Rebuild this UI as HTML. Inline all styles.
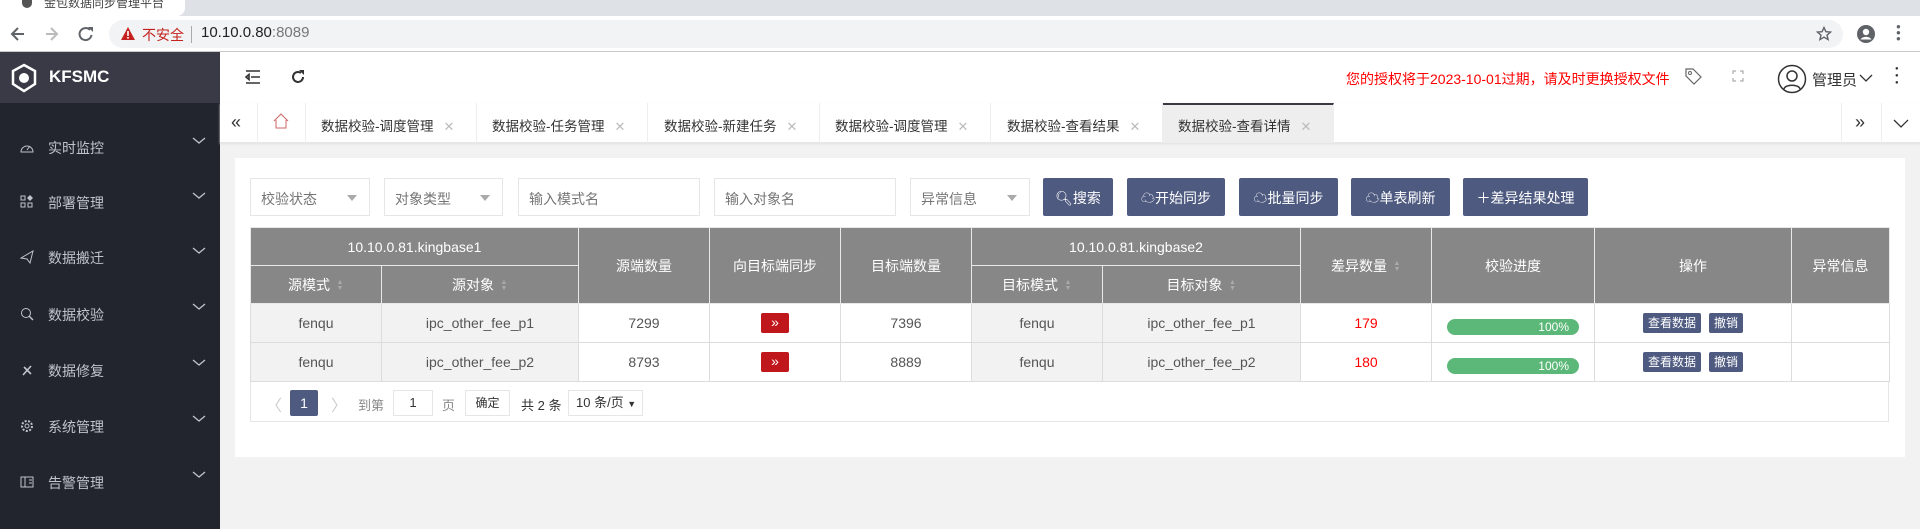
<!DOCTYPE html>
<html><head><meta charset="utf-8"><style>
*{box-sizing:border-box;margin:0;padding:0}
body{width:1920px;height:529px;overflow:hidden;font-family:"Liberation Sans","Noto Sans CJK SC",sans-serif;background:#f2f2f2;position:relative;font-size:14px;color:#333}
.abs{position:absolute}
.chrome-top{left:0;top:0;width:1920px;height:16px;background:#dee1e6}
.chrome-tab{left:0;top:0;width:185px;height:16px;background:#fff;border-radius:0 0 8px 0}
.addr{left:0;top:16px;width:1920px;height:36px;background:#fff;border-bottom:1px solid #c8c8c8}
.pill{left:109px;top:20px;width:1734px;height:28px;background:#f1f3f4;border-radius:14px}
.side{left:0;top:52px;width:220px;height:477px;background:#23252e}
.logo{left:0;top:52px;width:220px;height:51px;background:#393a46;color:#fff;font-weight:bold;font-size:17px}
.mi{left:0;width:220px;height:30px;color:#bfc3cb;font-size:14px}
.mi span{position:absolute;left:48px;top:6px}
.mi svg{position:absolute}
.hdr{left:220px;top:52px;width:1700px;height:51px;background:#fff}
.tabs{left:220px;top:103px;width:1700px;height:40px;background:#fff;border-bottom:1px solid #e6e6e6;box-shadow:0 1px 2px #e0e0e0}
.tab{position:absolute;top:0;height:40px;width:171px;border-right:1px solid #eee;font-size:13.5px;color:#333;padding:12px 0 0 15px;white-space:nowrap}
.tab i{font-style:normal;color:#bbb;margin-left:10px;font-size:13px}
.card{left:235px;top:158px;width:1670px;height:299px;background:#fff}
.sel{position:absolute;top:178px;height:38px;border:1px solid #e6e6e6;background:#fff;color:#757575;font-size:14px;padding:10px 0 0 10px}
.sel b{position:absolute;right:12px;top:16px;border:5px solid transparent;border-top:6px solid #aaa;width:0;height:0}
.btn{position:absolute;top:178px;height:38px;background:#4e5a80;color:#fff;font-size:14px;text-align:center;padding-top:10px;border-radius:2px}
table{position:absolute;left:250px;top:227px;border-collapse:collapse;table-layout:fixed}
td,th{border:1px solid #dcdcdc;text-align:center;font-weight:normal;font-size:14px;color:#555}
th{background:#878787;color:#fff;height:38px;border-color:#e8e8e8}
td{height:39px}
td.g{background:#f2f2f2}
.ar{display:inline-block;width:28px;height:20px;background:#c0171c;color:#fff;border-radius:2px;font-size:14px;line-height:19px;vertical-align:middle}
.pb{display:inline-block;width:132px;height:16px;background:#5cb878;border-radius:8px;color:#fff;font-size:12px;text-align:right;padding-right:10px;line-height:17px;margin-top:8px}
.ob{display:inline-block;background:#4e5a80;color:#fff;font-size:12px;height:20px;line-height:20px;padding:0 5px;border-radius:2px;margin:0 4px}
.so{display:inline-block;width:8px;vertical-align:middle;margin-left:6px;color:#aaa;font-size:7px;line-height:6px}
</style></head><body>
<div class="abs chrome-top"></div><div class="abs chrome-tab"></div>
<div class="abs" style="left:22px;top:0;width:10px;height:8px;border-radius:0 0 5px 5px;background:#555"></div>
<div class="abs" style="left:44px;top:-6px;font-size:12px;color:#444">金包数据同步管理平台</div>
<div class="abs addr"></div><div class="abs pill"></div>
<svg class="abs" style="left:10px;top:24px" width="100" height="20"><path d="M14 10H3M8 4L2 10l6 6" stroke="#5f6368" stroke-width="2" fill="none"/><path d="M36 10h11M41 4l6 6-6 6" stroke="#bbb" stroke-width="2" fill="none"/><path d="M80 6a6 6 0 1 0 1.5 5" stroke="#5f6368" stroke-width="2" fill="none"/><path d="M78 3h5v5z" fill="#5f6368"/></svg>
<svg class="abs" style="left:120px;top:26px" width="16" height="15"><path d="M8 1L15 14H1z" fill="#c5221f"/><rect x="7.2" y="5" width="1.6" height="5" fill="#fff"/><rect x="7.2" y="11" width="1.6" height="1.6" fill="#fff"/></svg>
<div class="abs" style="left:142px;top:25px;color:#c5221f;font-size:14px">不安全</div>
<div class="abs" style="left:191px;top:26px;width:1px;height:17px;background:#aaa"></div>
<div class="abs" style="left:201px;top:24px;font-size:15px;color:#222">10.10.0.80<span style="color:#777">:8089</span></div>
<svg class="abs" style="left:1816px;top:26px" width="16" height="16"><path d="M8 1.5l1.9 4.2 4.6.4-3.5 3 1.1 4.5L8 11.2 3.9 13.6 5 9.1l-3.5-3 4.6-.4z" stroke="#5f6368" stroke-width="1.4" fill="none"/></svg>
<svg class="abs" style="left:1856px;top:24px" width="20" height="20"><circle cx="10" cy="10" r="9" fill="#5f6368"/><circle cx="10" cy="8" r="3.2" fill="#fff"/><path d="M4.5 15.5c2-3.5 9-3.5 11 0" fill="#fff"/></svg>
<div class="abs" style="left:1896px;top:24px;width:3px;color:#5f6368;font-size:8px;line-height:6px">●<br>●<br>●</div>

<div class="abs side"></div>
<div class="abs logo"><svg class="abs" style="left:10px;top:11px" width="28" height="30"><path d="M14 2L25 8v13L14 28 3 21V8z" stroke="#fff" stroke-width="2.5" fill="none"/><circle cx="14" cy="15" r="5" fill="#fff"/></svg><span class="abs" style="left:49px;top:15px">KFSMC</span></div>
<div class="abs mi" style="top:132px"><svg style="left:20px;top:9px" width="14" height="12"><path d="M1 11a6 6 0 1 1 12 0z" stroke="#bfc3cb" fill="none"/><path d="M7 9l3-4" stroke="#bfc3cb"/></svg><span>实时监控</span></div>
<div class="abs mi" style="top:187px"><svg style="left:20px;top:8px" width="14" height="14"><rect x="1" y="1" width="4" height="4" stroke="#bfc3cb" fill="none"/><rect x="1" y="8" width="4" height="4" stroke="#bfc3cb" fill="none"/><rect x="8" y="8" width="4" height="4" stroke="#bfc3cb" fill="none"/><path d="M10 0l3 3-3 3-3-3z" fill="#bfc3cb"/></svg><span>部署管理</span></div>
<div class="abs mi" style="top:242px"><svg style="left:20px;top:8px" width="14" height="14"><path d="M1 8L13 1 10 13 7 9z" stroke="#bfc3cb" fill="none"/></svg><span>数据搬迁</span></div>
<div class="abs mi" style="top:299px"><svg style="left:20px;top:8px" width="14" height="14"><circle cx="6" cy="6" r="4.5" stroke="#bfc3cb" fill="none"/><path d="M9 9l4 4" stroke="#bfc3cb" stroke-width="1.5"/></svg><span>数据校验</span></div>
<div class="abs mi" style="top:355px"><svg style="left:20px;top:8px" width="14" height="14"><path d="M3 12L11 3M4 4l7 7" stroke="#bfc3cb" stroke-width="1.6"/></svg><span>数据修复</span></div>
<div class="abs mi" style="top:411px"><svg style="left:20px;top:8px" width="14" height="14"><circle cx="7" cy="7" r="5" stroke="#bfc3cb" stroke-width="2" stroke-dasharray="2 1.5" fill="none"/><circle cx="7" cy="7" r="2" stroke="#bfc3cb" fill="none"/></svg><span>系统管理</span></div>
<div class="abs mi" style="top:467px"><svg style="left:20px;top:8px" width="14" height="14"><rect x="1" y="2" width="12" height="10" stroke="#bfc3cb" fill="none"/><path d="M5 2v10M9 5h3M9 8h3" stroke="#bfc3cb"/></svg><span>告警管理</span></div>
<svg class="abs" style="left:192px;top:136px" width="14" height="360"><g stroke="#bfc3cb" fill="none" stroke-width="1.3"><path d="M1 2l6 5 6-5"/><path d="M1 57l6 5 6-5"/><path d="M1 112l6 5 6-5"/><path d="M1 168l6 5 6-5"/><path d="M1 224l6 5 6-5"/><path d="M1 280l6 5 6-5"/><path d="M1 336l6 5 6-5"/></g></svg>

<div class="abs hdr"></div>
<svg class="abs" style="left:245px;top:70px" width="16" height="14"><path d="M1 1h14M6 7h9M1 13h14M1 7l3-2.5v5z" stroke="#333" stroke-width="1.6" fill="none"/></svg>
<svg class="abs" style="left:290px;top:69px" width="16" height="16"><path d="M13 8a5 5 0 1 1-2-4" stroke="#333" stroke-width="2" fill="none"/><path d="M9 1h5v5z" fill="#333"/></svg>
<div class="abs" style="left:1346px;top:69px;color:#f00;font-size:14px;white-space:nowrap">您的授权将于2023-10-01过期，请及时更换授权文件</div>
<svg class="abs" style="left:1684px;top:67px" width="18" height="18"><path d="M2 2h7l8 8-7 7-8-8z" stroke="#666" fill="none" stroke-width="1.2"/><circle cx="6" cy="6" r="1.5" stroke="#666" fill="none"/></svg>
<svg class="abs" style="left:1732px;top:70px" width="12" height="12"><path d="M1 4V1h3M8 1h3v3M11 8v3H8M4 11H1V8" stroke="#999" fill="none"/></svg>
<svg class="abs" style="left:1777px;top:64px" width="30" height="30"><circle cx="15" cy="15" r="13.5" stroke="#333" stroke-width="1.5" fill="none"/><circle cx="15" cy="12" r="5" stroke="#333" stroke-width="1.5" fill="none"/><path d="M7 25c1-5 15-5 16 0" stroke="#333" stroke-width="1.5" fill="none"/></svg>
<div class="abs" style="left:1812px;top:69px;font-size:15px">管理员</div>
<svg class="abs" style="left:1859px;top:74px" width="14" height="9"><path d="M1 1l6 6 6-6" stroke="#333" fill="none" stroke-width="1.3"/></svg>
<div class="abs" style="left:1895px;top:66px;width:3px;color:#333;font-size:6px;line-height:7px">●<br>●<br>●</div>

<div class="abs tabs">
<div class="tab" style="left:0;width:38px;padding:9px 0 0 11px;font-size:18px">«</div>
<div class="tab" style="left:38px;width:48px;padding:10px 0 0 15px"><svg width="16" height="16"><path d="M1 8L8 1l7 7M3 7v8h10V7" stroke="#c66" fill="none"/></svg></div>
<div class="tab" style="left:86px">数据校验-调度管理<i>✕</i></div>
<div class="tab" style="left:257px">数据校验-任务管理<i>✕</i></div>
<div class="tab" style="left:429px">数据校验-新建任务<i>✕</i></div>
<div class="tab" style="left:600px">数据校验-调度管理<i>✕</i></div>
<div class="tab" style="left:772px">数据校验-查看结果<i>✕</i></div>
<div class="tab" style="left:943px;background:#eee;border-top:2px solid #393a46;padding-top:10px">数据校验-查看详情<i>✕</i></div>
<div class="tab" style="left:1621px;width:41px;border-left:1px solid #eee;padding:9px 0 0 13px;font-size:18px">»</div>
<svg class="abs" style="left:1673px;top:16px" width="16" height="9"><path d="M1 1l7 7 7-7" stroke="#333" fill="none" stroke-width="1.3"/></svg>
</div>

<div class="abs card"></div>
<div class="sel" style="left:250px;width:120px">校验状态<b></b></div>
<div class="sel" style="left:384px;width:119px">对象类型<b></b></div>
<div class="sel" style="left:518px;width:182px">输入模式名</div>
<div class="sel" style="left:714px;width:182px">输入对象名</div>
<div class="sel" style="left:910px;width:120px">异常信息<b></b></div>
<div class="btn" style="left:1043px;width:70px">🔍︎搜索</div>
<div class="btn" style="left:1127px;width:98px">☁开始同步</div>
<div class="btn" style="left:1239px;width:99px">☁批量同步</div>
<div class="btn" style="left:1351px;width:99px">☁单表刷新</div>
<div class="btn" style="left:1463px;width:125px">＋差异结果处理</div>

<table>
<colgroup><col style="width:131px"><col style="width:197px"><col style="width:131px"><col style="width:131px"><col style="width:131px"><col style="width:131px"><col style="width:198px"><col style="width:131px"><col style="width:163px"><col style="width:197px"><col style="width:98px"></colgroup>
<tr><th colspan="2">10.10.0.81.kingbase1</th><th rowspan="2">源端数量</th><th rowspan="2">向目标端同步</th><th rowspan="2">目标端数量</th><th colspan="2">10.10.0.81.kingbase2</th><th rowspan="2">差异数量<span class="so">▲<br>▼</span></th><th rowspan="2">校验进度</th><th rowspan="2">操作</th><th rowspan="2">异常信息</th></tr>
<tr><th>源模式<span class="so">▲<br>▼</span></th><th>源对象<span class="so">▲<br>▼</span></th><th>目标模式<span class="so">▲<br>▼</span></th><th>目标对象<span class="so">▲<br>▼</span></th></tr>
<tr><td class="g">fenqu</td><td class="g">ipc_other_fee_p1</td><td>7299</td><td><span class="ar">»</span></td><td>7396</td><td class="g">fenqu</td><td class="g">ipc_other_fee_p1</td><td style="color:#f00">179</td><td><span class="pb">100%</span></td><td><span class="ob">查看数据</span><span class="ob">撤销</span></td><td></td></tr>
<tr><td class="g">fenqu</td><td class="g">ipc_other_fee_p2</td><td>8793</td><td><span class="ar">»</span></td><td>8889</td><td class="g">fenqu</td><td class="g">ipc_other_fee_p2</td><td style="color:#f00">180</td><td><span class="pb">100%</span></td><td><span class="ob">查看数据</span><span class="ob">撤销</span></td><td></td></tr>
</table>
<div class="abs" style="left:250px;top:382px;width:1639px;height:40px;border:1px solid #e6e6e6;border-top:none"></div>
<div class="abs" style="left:266px;top:392px;color:#ccc;font-size:16px">〈</div>
<div class="abs" style="left:290px;top:390px;width:28px;height:26px;background:#4e5a80;color:#fff;text-align:center;line-height:26px;border-radius:2px">1</div>
<div class="abs" style="left:331px;top:392px;color:#ccc;font-size:16px">〉</div>
<div class="abs" style="left:358px;top:395px;color:#888;font-size:13px">到第</div>
<div class="abs" style="left:393px;top:390px;width:40px;height:26px;border:1px solid #e6e6e6;text-align:center;line-height:24px;font-size:13px">1</div>
<div class="abs" style="left:442px;top:395px;color:#888;font-size:13px">页</div>
<div class="abs" style="left:465px;top:390px;width:45px;height:26px;border:1px solid #e6e6e6;text-align:center;line-height:24px;font-size:12px">确定</div>
<div class="abs" style="left:521px;top:395px;font-size:13px">共 2 条</div>
<div class="abs" style="left:568px;top:390px;width:75px;height:26px;border:1px solid #e6e6e6;line-height:24px;font-size:13px;padding-left:7px">10 条/页 <span style="font-size:9px">▼</span></div>
</body></html>
